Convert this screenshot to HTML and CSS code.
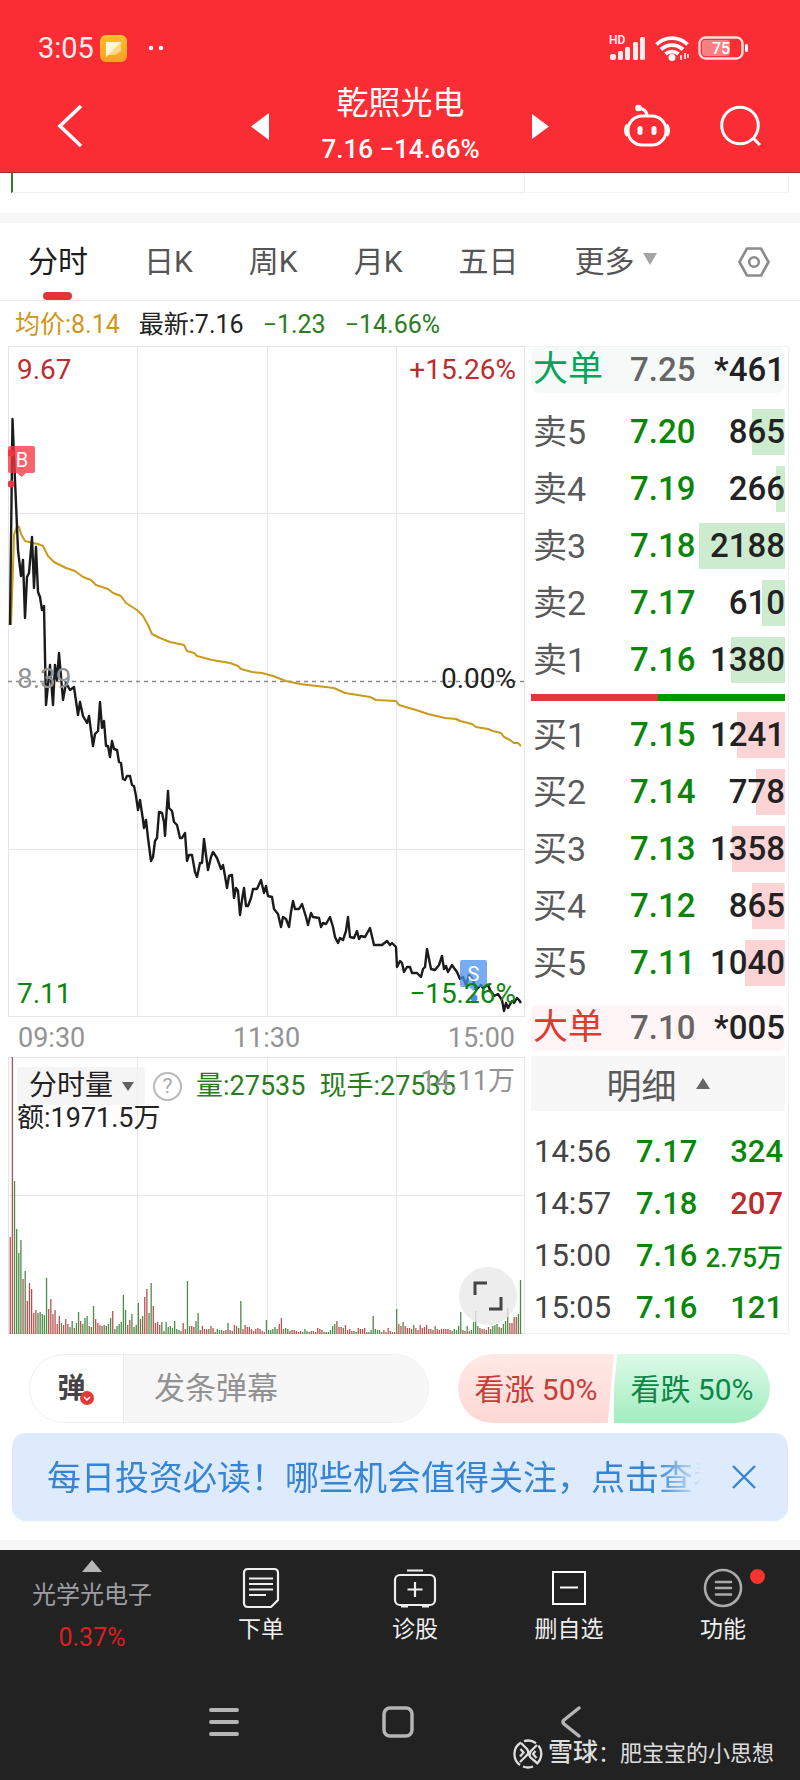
FILE: index.html
```html
<!DOCTYPE html>
<html lang="zh-CN">
<head>
<meta charset="utf-8">
<meta name="viewport" content="width=device-width, initial-scale=1">
<title>乾照光电</title>
<link rel="stylesheet" href="styles.css">
</head>
<body>
<header class="top">
  <div class="status">
    <span class="clock">3:05</span>
    <svg class="app-icon" width="27" height="27" viewBox="0 0 27 27"><defs><linearGradient id="gold" x1="0" y1="0" x2="0" y2="1"><stop offset="0" stop-color="#fbc02d"/><stop offset="1" stop-color="#fb9f24"/></linearGradient></defs><rect width="27" height="27" rx="6" fill="url(#gold)"/><path d="M6 7h15v9L15 20H6z" fill="#fcd98a"/><path d="M6 7h15L6 22z" fill="#fff6da"/></svg>
    <svg class="dots" width="16" height="6" viewBox="0 0 16 6" fill="#fff"><circle cx="3" cy="3" r="2.2"/><circle cx="13" cy="3" r="2.2"/></svg>
    <span class="signals">
      <span class="cell"><span class="hd">HD</span>
      <svg width="37" height="24" viewBox="0 0 37 24" fill="#ffe9ea"><rect x="1" y="18" width="6" height="6" rx="2"/><rect x="9" y="15" width="5" height="9" rx="1.5"/><rect x="16" y="11" width="5" height="13" rx="1.5"/><rect x="24" y="6" width="5" height="18" rx="1.5"/><rect x="31" y="1" width="5" height="23" rx="1.5"/></svg></span>
      <svg width="34" height="26" viewBox="0 0 34 26" fill="none" stroke="#fff" stroke-width="3.8"><path d="M1.500 9.500a22 22 0 0 1 31 0"/><path d="M6 14.500a16 16 0 0 1 22 0"/><path d="M10.500 19a10 10 0 0 1 13 0"/><circle cx="17" cy="22.500" r="1.600" fill="#fff"/><path d="M26 20v5M30 18v6M33 19v4" stroke-width="1.500"/></svg>
      <svg width="52" height="24" viewBox="0 0 52 24"><rect x="1.500" y="1.500" width="43" height="21" rx="6" fill="none" stroke="#ffe0e1" stroke-width="2.400"/><rect x="4" y="4" width="28" height="16" rx="3" fill="#fb8084"/><rect x="47" y="8" width="3" height="8" rx="1.500" fill="#fff"/><text x="23" y="18" class="battery-text" text-anchor="middle">75</text></svg>
    </span>
  </div>
  <nav class="title-bar">
    <button class="bare back" aria-label="返回"><svg width="26" height="44" viewBox="0 0 26 44" fill="none" stroke="#fff" stroke-width="3.6"><path d="M24 2 3 22l21 20"/></svg></button>
    <div class="stock">
      <button class="bare" aria-label="上一只"><svg width="18" height="27" viewBox="0 0 18 27"><path d="M18 0v27L0 13.500z" fill="#fff"/></svg></button>
      <div class="stock-name"><h1>乾照光电</h1><p>7.16 −14.66%</p></div>
      <button class="bare" aria-label="下一只"><svg width="17" height="25" viewBox="0 0 17 25"><path d="M0 0v25l17-12.500z" fill="#fff"/></svg></button>
    </div>
    <div class="tools">
      <button class="bare" aria-label="助手"><svg width="48" height="44" viewBox="0 0 48 44" fill="none" stroke="#fff" stroke-width="3"><rect x="5" y="12" width="38" height="29" rx="14"/><path d="M24 12c0-5-3-7-8-8"/><circle cx="15.500" cy="4" r="1.800" fill="#fff"/><path d="M4.500 21c-2.500 2-2.500 8 0 10.500M43.500 21c2.500 2 2.500 8 0 10.500" stroke-width="3.500"/><path d="M17 24.500v4M31 24.500v4" stroke-width="5" stroke-linecap="round"/></svg></button>
      <button class="bare" aria-label="搜索"><svg width="42" height="42" viewBox="0 0 42 42" fill="none" stroke="#fff" stroke-width="3"><circle cx="20" cy="20.500" r="18.300"/><path d="m33 33 7 7"/></svg></button>
    </div>
  </nav>
</header>

<main>
  <div class="strip columns"><div class="strip-left"></div><div class="strip-right"></div></div>
  <div class="band"></div>
  <nav class="tabs">
    <button class="bare active">分时</button>
    <button class="bare">日K</button>
    <button class="bare">周K</button>
    <button class="bare">月K</button>
    <button class="bare">五日</button>
    <button class="bare more">更多<svg width="14" height="12" viewBox="0 0 14 12"><path d="M0 0h14L7 12z" fill="#a5a5a5"/></svg></button>
    <button class="bare gear" aria-label="设置"><svg width="32" height="32" viewBox="0 0 32 32" fill="none" stroke="#8c8c8c" stroke-width="2.600" stroke-linejoin="round"><path d="M9 2.500h14L30.500 16 23 29.500H9L1.500 16z"/><circle cx="16" cy="16" r="4.800"/></svg></button>
  </nav>
  <p class="summary"><span class="gold">均价:8.14</span><span>最新:7.16</span><span class="down">−1.23</span><span class="down">−14.66%</span></p>

  <div class="columns quote">
    <section>
      <div class="plot">
        <svg class="canvas" viewBox="8 346 517 671">
          <path class="grid" d="M8.500 346V1017M137.500 346V1017M267.500 346V1017M396.500 346V1017M524.500 346V1017M8 346.500H525M8 513.500H525M8 849.500H525M8 1016.500H525"/>
          <path class="zero" d="M8 681.500H525"/>
          <polyline class="avg" points="11,625 13,567 14,535 17,526 19,527 21,534 25,541 33,543 38,544 43,546 48,556 54,562 60,565 66,568 75,571 83,577 91,580 96,585 108,589 113,593 121,596 126,603 137,610 143,616 148,625 152,634 160,638 170,642 184,645 187,651 194,653 197,656 212,660 230,663 238,666 241,669 252,672 262,673 273,676 286,681 300,684 334,688 345,693 370,697 376,700 396,701 399,705 416,710 428,714 445,718 456,719 460,721 472,724 476,727 488,729 493,731 501,733 504,737 510,740 514,743 518,743 521,746"/>
          <polyline class="price" points="10,625 12.500,419 15,480 18,550 21,576 23,560 25,618 27,577 29,573 32,537 34,588 36,547 38,592 40,597 42,610 44,606 46,705 50,665 53,705 55,665 57,680 59,653 63,700 66,683 70,690 74,687 78,715 80,702 83,716 87,723 89,716 93,746 95,734 98,731 100,702 102,728 104,721 106,746 108,746 110,757 112,741 114,749 117,750 119,762 121,763 123,779 125,780 127,776 130,776 132,785 134,786 136,796 138,810 140,800 143,820 144,828 146,820 148,838 151,861 153,857 155,841 157,838 159,812 162,813 164,822 165,836 168,791 169,808 172,811 174,822 177,825 180,838 182,838 185,833 187,861 189,855 192,855 195,872 197,877 200,863 202,863 204,839 206,855 208,870 211,857 213,852 217,858 221,869 223,865 225,876 227,888 229,876 232,875 234,898 236,888 238,891 240,915 242,900 244,888 246,906 248,906 251,898 253,889 257,889 261,880 264,893 266,886 268,896 272,897 274,909 278,914 281,927 283,917 286,919 289,927 291,912 293,901 295,909 299,909 302,904 306,917 308,925 311,913 313,917 319,918 321,927 323,923 326,924 330,917 333,927 335,937 338,943 340,938 343,940 346,931 348,917 350,937 354,938 357,931 359,939 361,936 365,937 370,928 374,945 382,945 387,941 390,945 392,943 396,947 397,967 400,961 402,963 404,972 407,967 410,967 412,973 417,973 421,977 423,969 425,967 427,949 431,969 435,970 439,965 442,956 444,969 446,966 448,972 452,965 454,968 457,972 460,979 463,977 466,985 469,975 473,980 476,990 481,985 483,988 488,985 490,990 494,996 498,994 502,1000 504,1011 506,1003 508,1008 512,1001 514,1003 517,998 519,1000 521,1003"/>
          <g fill="#f5333c"><path d="M10 446h23q2 0 2 2v23q0 2-2 2h-7l-4.500 4-4.500-4h-7q-2 0-2-2v-23q0-2 2-2z" fill-opacity=".76"/><circle cx="11" cy="453" r="3.500"/><circle cx="11" cy="484" r="3.500"/></g>
          <text class="flag" x="22" y="467" text-anchor="middle">B</text>
          <g fill="#468fee"><path d="M462 960h23q2 0 2 2v23q0 2-2 2h-7l-4.500 4-4.500-4h-7q-2 0-2-2v-23q0-2 2-2z" fill-opacity=".74"/><circle cx="474" cy="998" r="3.500"/></g>
          <text class="flag" x="473.500" y="981" text-anchor="middle">S</text>
        </svg>
        <span class="mark tl up">9.67</span><span class="mark tr up">+15.26%</span>
        <span class="mark ml muted">8.39</span><span class="mark mr">0.00%</span>
        <span class="mark bl fall">7.11</span><span class="mark br fall">−15.26%</span>
      </div>
      <div class="hours"><span>09:30</span><span>11:30</span><span>15:00</span></div>
      <div class="plot">
        <svg class="canvas" viewBox="8 1057 517 277">
          <path class="grid" d="M8.500 1057V1334M137.500 1057V1334M267.500 1057V1334M396.500 1057V1334M524.500 1057V1334M8 1057.500H525M8 1195.500H525M8 1333.500H525"/>
          <g id="bars"></g>
        </svg>
        <div class="volume-info">
          <button class="bare indicator">分时量<svg width="12" height="9" viewBox="0 0 12 9"><path d="M0 0h12L6 9z" fill="#606060"/></svg></button>
          <button class="bare help" aria-label="说明">?</button>
          <span class="down">量:27535</span><span class="down">现手:27535</span>
          <span class="amount">额:1971.5万</span>
        </div>
        <span class="max-volume">14.11万</span>
        <button class="bare expand" aria-label="全屏"><svg width="30" height="30" viewBox="0 0 30 30" fill="none" stroke="#444" stroke-width="3"><path d="M2 14V2h12M28 16v12H16"/></svg></button>
      </div>
    </section>

    <section class="book">
      <table class="levels big sell"><tr><th>大单</th><td>7.25</td><td class="qty">*461</td></tr></table>
      <table class="levels asks">
        <tr><th>卖5</th><td>7.20</td><td class="qty"><div style="--w:38%">865</div></td></tr>
        <tr><th>卖4</th><td>7.19</td><td class="qty"><div style="--w:11%">266</div></td></tr>
        <tr><th>卖3</th><td>7.18</td><td class="qty"><div style="--w:100%">2188</div></td></tr>
        <tr><th>卖2</th><td>7.17</td><td class="qty"><div style="--w:27%">610</div></td></tr>
        <tr><th>卖1</th><td>7.16</td><td class="qty"><div style="--w:63%">1380</div></td></tr>
      </table>
      <div class="ratio"><i></i><i></i></div>
      <table class="levels bids">
        <tr><th>买1</th><td>7.15</td><td class="qty"><div style="--w:56%">1241</div></td></tr>
        <tr><th>买2</th><td>7.14</td><td class="qty"><div style="--w:34%">778</div></td></tr>
        <tr><th>买3</th><td>7.13</td><td class="qty"><div style="--w:62%">1358</div></td></tr>
        <tr><th>买4</th><td>7.12</td><td class="qty"><div style="--w:38%">865</div></td></tr>
        <tr><th>买5</th><td>7.11</td><td class="qty"><div style="--w:47%">1040</div></td></tr>
      </table>
      <table class="levels big buy"><tr><th>大单</th><td>7.10</td><td class="qty">*005</td></tr></table>
      <button class="bare detail">明细<svg width="14" height="11" viewBox="0 0 14 11"><path d="M7 0l7 11H0z" fill="#666"/></svg></button>
      <table class="ticks">
        <tr><th>14:56</th><td>7.17</td><td>324</td></tr>
        <tr><th>14:57</th><td>7.18</td><td class="up">207</td></tr>
        <tr><th>15:00</th><td>7.16</td><td class="small">2.75万</td></tr>
        <tr><th>15:05</th><td>7.16</td><td>121</td></tr>
      </table>
    </section>
  </div>

  <div class="interact">
    <div class="danmu">
      <button class="bare danmu-toggle" aria-label="弹幕开关"><span>弹<svg width="14" height="14" viewBox="0 0 14 14"><circle cx="7" cy="7" r="7" fill="#e23b35"/><path d="m4 6 3 3 3-3" fill="none" stroke="#fff" stroke-width="1.500"/></svg></span></button>
      <input type="text" placeholder="发条弹幕" aria-label="发条弹幕">
    </div>
    <div class="vote"><button class="bare rise">看涨 50%</button><button class="bare drop">看跌 50%</button></div>
  </div>
  <div class="banner"><a href="#">每日投资必读！哪些机会值得关注，点击查看</a><button class="bare" aria-label="关闭"><svg width="24" height="24" viewBox="0 0 24 24" stroke="#3585d4" stroke-width="2.400"><path d="m1 1 22 22M23 1 1 23"/></svg></button></div>
  <div class="band"></div>
</main>

<footer>
  <nav class="actions">
    <a href="#" class="sector"><svg width="20" height="12" viewBox="0 0 20 12"><path d="M10 0l10 12H0z" fill="#b5b5b5"/></svg><span>光学光电子</span><em>0.37%</em></a>
    <a href="#"><svg width="42" height="42" viewBox="0 0 42 42" fill="none" stroke="#eee" stroke-width="2.200"><path d="M8 2h26q4 0 4 4v27l-7 7H8q-4 0-4-4V6q0-4 4-4z"/><path d="M9 11.500h24M9 17h24M9 22.500h24M9 28h17"/></svg>下单</a>
    <a href="#"><svg width="44" height="42" viewBox="0 0 44 42" fill="none" stroke="#eee" stroke-width="2.200"><rect x="2" y="8" width="40" height="30" rx="5"/><path d="M14 3.500h16M22 15v15M14.500 22.500h15M8 39.500h7M29 39.500h7"/></svg>诊股</a>
    <a href="#"><svg width="42" height="42" viewBox="0 0 42 42" fill="none" stroke="#fff" stroke-width="2"><path d="M5 5h32v32H5zM12 20.500h18"/></svg>删自选</a>
    <a href="#" class="functions"><svg width="40" height="42" viewBox="0 0 40 42" fill="none" stroke="#aaa" stroke-width="2.600"><circle cx="20" cy="21" r="18"/><path d="M13 15h15M13 21h15M13 27.500h15" stroke-linecap="round"/></svg>功能<i></i></a>
  </nav>
  <div class="system">
    <button class="bare" aria-label="任务"><svg width="32" height="32" viewBox="0 0 32 32" stroke="#b5b5b5" stroke-width="4" stroke-linecap="round"><path d="M3 4h26M3 16h26M3 28h26"/></svg></button>
    <button class="bare" aria-label="主页"><svg width="32" height="32" viewBox="0 0 32 32" fill="none" stroke="#b5b5b5" stroke-width="3.500"><rect x="2" y="2" width="28" height="28" rx="6"/></svg></button>
    <button class="bare" aria-label="返回"><svg width="32" height="32" viewBox="0 0 32 32" fill="none" stroke="#b5b5b5" stroke-width="3.500" stroke-linecap="round" stroke-linejoin="round"><path d="M23 2 8 14q-2 2 0 4l15 12"/></svg></button>
    <div class="credit"><svg width="30" height="30" viewBox="0 0 30 30" fill="none" stroke="#ddd" stroke-width="2.300"><path d="M8 3.500a13.500 13.500 0 0 0-1 22.500M11 2.200a13.500 13.500 0 0 1 12 2M25.500 6.500a13.500 13.500 0 0 1-2 18.500M20 27.500a13.500 13.500 0 0 1-10 0"/><path d="M8 4l6 6q3 4-1 7l-6 6M24 6l-6 6q-3 4 0 7l6 5M7.500 10l3 3.500-3.500 4M22.500 12l-2.500 3 3.500 4"/></svg><span><b>雪球</b>：肥宝宝的小思想</span></div>
  </div>
</footer>
<script src="chart.js"></script>
</body>
</html>
```

FILE: chart.js
```js
// One bar per trading minute: r = up, g = down, followed by the bar height.
const minutes = `r97 r277 g153 g105 g81 g94 r55 g63 r33 r51 r45 r21 r24 g21 g22 g20 g19 g56 r25 r35 r20 r24 r10 r18 g11 r9 r15 r10 g7 g13 r6 g11 g22 r13 g10 g16 g18 r8 g7 g28 r15 r11 r9 g8 r9 g8 g10 g16 r23 g5 g8 g10 g12 g39 g24 r9 r14 g20 g7 g9 g31 r15 g18 r37 r45 g21 g51 r28 r11 r12 r9 g12 g3 g12 g7 g8 g6 g13 g5 g4 g3 r11 r5 g53 g8 r8 r7 g13 g21 r4 r8 r5 r5 g5 r8 r6 g2 g5 g4 g4 r3 r4 g11 r4 r3 r9 g8 r6 g33 r5 r9 r7 r7 r5 r3 r5 r6 r5 r3 r2 g14
g4 g4 g5 g7 g5 r10 r16 r5 g6 g5 r3 r4 r4 r3 r2 r3 g2 g5 g3 g2 r3 r3 r2 r6 r5 r4 g2 g2 g2 g4 g8 g10 r13 r7 r7 g6 r9 r4 r5 r3 g3 g2 r6 r5 r5 r6 g2 g2 g4 g18 g5 g4 g4 g2 r4 r2 r6 r3 r2 r2 g25 r10 r8 g12 r8 r6 r6 r5 g9 r6 r4 r9 r6 r7 r9 r5 r5 g4 r8 r5 r4 r5 r5 r5 r5 r4 g3 g5 g4 g8 g22 r4 r3 g8 r3 g4 g12 g23 g8 r6 r5 r5 g4 r7 g5 g8 g9 g10 r7 g6 g10 g13 g26 r11 r11 r17 r17 g20 g1`.split(/\s+/);
const group = document.getElementById("bars");
const addBar = (index, code) => {
  const bar = document.createElementNS("http://www.w3.org/2000/svg", "rect");
  const height = Number(code.slice(1));
  bar.setAttribute("x", 9.6 + index * 2.135);
  bar.setAttribute("y", 1334 - height);
  bar.setAttribute("width", 1.3);
  bar.setAttribute("height", height);
  bar.setAttribute("class", code[0] === "r" ? "bar-up" : "bar-down");
  group.appendChild(bar);
};
minutes.forEach((code, index) => addBar(index, code));
addBar(239, "g54");
```

FILE: styles.css
```css
* { box-sizing: border-box; }
body {
  margin: 0;
  background: #fff;
  color: #222;
  font-family: Roboto, "Noto Sans CJK SC", sans-serif;
}
h1, p { margin: 0; font-weight: 400; }
svg { display: block; flex: none; }
a { color: inherit; text-decoration: none; }
.bare {
  padding: 0;
  border: 0;
  background: none;
  color: inherit;
  font: inherit;
}
.up { color: #bd2c2e; }
.down { color: #2a7d1e; }
.fall { color: #0a870a; }
.gold { color: #cf9718; }

.top { background: #fa2d34; color: #fff; border-bottom: 1px solid #a0322f; }
.status {
  display: flex;
  align-items: center;
  height: 80px;
  padding: 16px 50px 0 38px;
}
.clock { font-size: 29px; color: #ffecec; }
.app-icon { margin-left: 6px; }
.dots { margin-left: 21px; }
.signals { display: flex; align-items: center; gap: 9px; margin-left: auto; }
.cell { position: relative; }
.hd { position: absolute; left: 0; top: -3px; font-size: 12px; line-height: 14px; font-weight: 500; }
.battery-text { font-size: 16px; font-weight: 500; fill: #fff; }
.title-bar {
  display: grid;
  grid-template-columns: 1fr auto 1fr;
  align-items: center;
  height: 92px;
}
.back { justify-self: start; margin-left: 57px; }
.stock { display: flex; align-items: center; gap: 52px; }
.stock-name { text-align: center; line-height: 46px; }
.stock-name h1 { font-size: 32px; font-weight: 400; }
.stock-name p { font-size: 26px; font-weight: 500; }
.tools { display: flex; align-items: center; justify-content: flex-end; gap: 49px; padding-right: 38px; }

.columns {
  display: grid;
  grid-template-columns: 517fr 264fr;
  padding: 0 11px 0 8px;
}
.strip { height: 40px; padding-bottom: 20px; }
.strip-left { margin-left: 3px; border: solid #eee; border-width: 0 1px 1px 0; border-left: 2px solid #2f7c2c; }
.strip-right { border: solid #f4f4f4; border-width: 0 1px 1px 0; }
.band { height: 10px; background: #f7f7f7; }

.tabs {
  display: flex;
  align-items: stretch;
  gap: 56px;
  height: 78px;
  padding: 0 30px 0 28px;
  border-bottom: 1px solid #e9e9e9;
  color: #555;
  font-size: 30px;
}
.tabs button { padding-bottom: 6px; }
.tabs .active { position: relative; color: #1c1c1c; }
.tabs .active::after {
  content: "";
  position: absolute;
  left: 50%;
  bottom: 0;
  width: 29px;
  height: 8px;
  margin-left: -15px;
  border-radius: 4px;
  background: #e63338;
}
.more { display: flex; align-items: center; gap: 9px; }
.tabs .gear { margin-left: auto; padding-bottom: 0; }
.summary {
  display: flex;
  gap: 19px;
  padding-left: 15px;
  height: 45px;
  line-height: 48px;
  font-size: 25px;
}

.plot { position: relative; }
.canvas { width: 100%; height: auto; }
.grid { stroke: #e6e6e6; fill: none; }
.zero { stroke: #8a8a8a; stroke-width: 1.3; stroke-dasharray: 4 4; }
.price { fill: none; stroke: #1b1b1b; stroke-width: 2.4; stroke-linejoin: round; }
.avg { fill: none; stroke: #c99a1c; stroke-width: 2; stroke-linejoin: round; }
.flag { font-size: 20px; fill: #fff; }
.bar-up { fill: #b65350; }
.bar-down { fill: #4b8c47; }
.mark { position: absolute; font-size: 28px; line-height: 32px; }
.tl, .ml, .bl { left: 9px; }
.tr, .mr, .br { right: 9px; }
.tl, .tr { top: 8px; }
.ml, .mr { top: 317px; }
.bl, .br { bottom: 7px; }
.muted { color: #939393; }
.hours {
  display: flex;
  justify-content: space-between;
  height: 40px;
  padding: 0 10px;
  line-height: 43px;
  font-size: 27px;
  color: #939393;
}
.volume-info {
  position: absolute;
  top: 10px;
  left: 9px;
  display: flex;
  flex-wrap: wrap;
  align-items: center;
  column-gap: 14px;
  width: 460px;
  font-size: 27px;
  line-height: 38px;
}
.indicator {
  display: flex;
  align-items: center;
  gap: 9px;
  height: 38px;
  margin-right: -6px;
  padding: 0 11px 0 12px;
  border-radius: 4px;
  background: #f4f2f3cc;
  font-size: 28px;
}
.help {
  width: 29px;
  height: 29px;
  border: 2px solid #b9b9b9;
  border-radius: 50%;
  color: #aaa;
  font-size: 21px;
  line-height: 24px;
}
.amount { line-height: 26px; }
.max-volume { position: absolute; top: 8px; right: 10px; font-size: 27px; line-height: 32px; color: #939393; }
.expand {
  position: absolute;
  right: 8px;
  bottom: 9px;
  display: grid;
  place-items: center;
  width: 58px;
  height: 58px;
  border-radius: 50%;
  background: #e8e8e8cc;
}

.book { padding: 0 3px 0 6px; border: 1px solid #f2f2f2; border-left: 0; }
table { width: 100%; table-layout: fixed; border-collapse: collapse; }
th, td { padding: 0; text-align: left; white-space: nowrap; }
th { font-weight: 400; }
.levels { font-size: 33px; line-height: 46px; color: #0a870a; font-weight: 500; }
.levels th { width: 99px; padding-left: 2px; color: #5a5a5a; font-size: 34px; }
.levels .qty { width: 86px; color: #222; text-align: right; }
.levels tr { height: 57px; }
.qty div {
  height: 46px;
  background: linear-gradient(var(--depth), var(--depth)) right / var(--w) 100% no-repeat;
}
.asks { --depth: #cdebce; margin-top: 10px; }
.bids { --depth: #fdd4d6; margin-top: 5px; }
.levels.big { border-radius: 8px; color: #666; }
.levels.big tr { height: 46px; }
.sell { background: #f5faf8; }
.buy { margin-top: 14px; background: #fff5f6; }
.levels.sell th { color: #08a35a; font-size: 35px; }
.levels.buy th { color: #df3a30; font-size: 35px; }
.ratio { display: flex; height: 7px; margin-top: 6px; }
.ratio i { flex: 1; background: #e3383a; }
.ratio i + i { background: #089408; }
.detail {
  display: flex;
  align-items: center;
  justify-content: center;
  gap: 19px;
  width: 100%;
  height: 55px;
  margin-top: 5px;
  background: #f7f7f7;
  color: #5a5a5a;
  font-size: 35px;
}
.ticks { margin-top: 14px; font-size: 31px; color: #0a870a; font-weight: 500; }
.ticks tr { height: 52px; }
.ticks th { width: 105px; padding-left: 3px; color: #444; }
.ticks td:last-child { width: 86px; padding-right: 2px; text-align: right; }
.ticks .up { color: #bd2c2e; }
.ticks .small { font-size: 26px; }

.interact {
  display: flex;
  justify-content: space-between;
  padding: 20px 30px 10px 29px;
}
.danmu {
  display: flex;
  width: 400px;
  height: 69px;
  overflow: hidden;
  border: 1px solid #f0f0f0;
  border-radius: 35px;
}
.danmu-toggle { flex: none; width: 94px; padding: 0 10px 6px 0; border-right: 1px solid #eaeaea; font-size: 28px; font-weight: 700; color: #444; }
.danmu-toggle span { position: relative; }
.danmu-toggle svg { position: absolute; right: -8px; bottom: 0; }
.danmu input {
  flex: 1;
  min-width: 0;
  padding: 0 30px;
  border: 0;
  background: #f7f7f7;
  font: inherit;
  font-size: 31px;
}
.danmu input::placeholder { color: #929292; opacity: 1; }
.vote { display: flex; width: 312px; overflow: hidden; border-radius: 35px; font-size: 30px; }
.vote button { flex: 1; padding-bottom: 3px; }
.rise { color: #c93d36; background: linear-gradient(#ffe9e6, #fdd8d4); clip-path: polygon(0 0, 100% 0, 96% 100%, 0 100%); }
.drop { color: #0c8747; background: linear-gradient(#dcf9e7, #a3edc0); clip-path: polygon(2% 0, 100% 0, 100% 100%, -2% 100%); }
.banner {
  display: flex;
  align-items: center;
  justify-content: space-between;
  height: 88px;
  margin: 0 12px 19px;
  padding: 0 32px 0 35px;
  border-radius: 14px;
  background: #deebfd;
  color: #3585d4;
}
.banner a {
  width: 655px;
  padding-bottom: 3px;
  overflow: hidden;
  font-size: 34px;
  white-space: nowrap;
  mask-image: linear-gradient(90deg, #000 93%, transparent);
}

footer { background: #222; color: #eee; }
.actions {
  display: grid;
  grid-template-columns: 184fr repeat(4, 154fr);
  height: 130px;
  padding-top: 17px;
  font-size: 23px;
  line-height: 36px;
}
.actions a { position: relative; display: flex; flex-direction: column; align-items: center; gap: 3px; }
.actions .sector { gap: 2px; margin-top: -7px; color: #9d9da3; font-size: 24px; }
.sector svg { margin-bottom: 3px; }
.sector em { margin-top: 5px; color: #dc2020; font-style: normal; font-size: 25px; }
.functions i {
  position: absolute;
  top: 2px;
  left: 50%;
  width: 15px;
  height: 15px;
  margin-left: 27px;
  border-radius: 50%;
  background: #f5342f;
}
.system {
  position: relative;
  display: flex;
  justify-content: center;
  gap: 142px;
  height: 101px;
  padding: 26px 4px 0 0;
}
.system .bare { align-self: flex-start; }
.credit {
  position: absolute;
  right: 26px;
  bottom: 9px;
  display: flex;
  align-items: center;
  gap: 5px;
  font-size: 22px;
  line-height: 36px;
  color: #ddd;
}
.credit b { font-size: 25px; font-weight: 500; }
```
